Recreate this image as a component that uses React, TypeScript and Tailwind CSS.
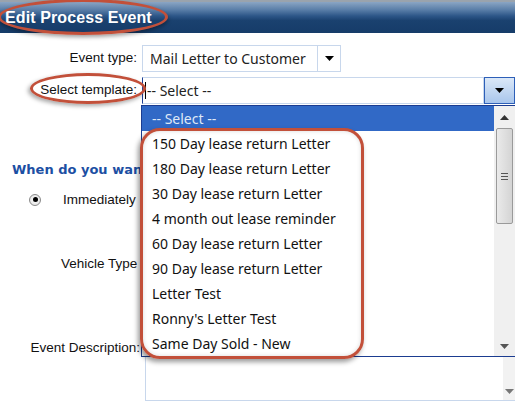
import React from "react";

const templates = [
  "150 Day lease return Letter",
  "180 Day lease return Letter",
  "30 Day lease return Letter",
  "4 month out lease reminder",
  "60 Day lease return Letter",
  "90 Day lease return Letter",
  "Letter Test",
  "Ronny's Letter Test",
  "Same Day Sold - New",
];

function Caret({ className = "" }: { className?: string }) {
  return (
    <svg width="9" height="5" viewBox="0 0 9 5" className={className}>
      <path d="M0 0 H9 L4.5 5 Z" fill="currentColor" />
    </svg>
  );
}

export default function App() {
  return (
    <div className="relative w-[515px] h-[416px] overflow-hidden bg-white font-['Liberation_Sans',Arial,sans-serif]">
      {/* barra do título */}
      <div className="h-[33px] border-t-2 border-[#9aa3ad] bg-[linear-gradient(180deg,#8aa5c4_0%,#5a7ea8_25%,#2d5688_45%,#1a416f_60%,#163c69_100%)] flex items-center pl-[5px]">
        <h1 className="text-white font-bold text-[16px] tracking-[0.1px]">Edit Process Event</h1>
      </div>

      {/* formulário */}
      <div className="grid grid-cols-[137px_1fr] gap-x-[5px] pt-[12px] text-[13.5px] text-[#111]">
        <label className="text-right self-center">Event type:</label>
        <div className="flex h-[27px] w-[199px] font-['Noto_Sans',sans-serif] text-[14px]">
          <div className="flex-1 border border-[#c8d7ec] flex items-center pl-[7px] text-[#222]">
            Mail Letter to Customer
          </div>
          <div className="w-[23px] border border-l-0 border-[#c8d7ec] flex items-center justify-center text-black">
            <Caret />
          </div>
        </div>

        <label className="text-right self-center mt-[5px]">Select template:</label>
        <div className="flex h-[27px] mt-[5px] font-['Noto_Sans',sans-serif] text-[14px]">
          <div className="flex-1 border border-[#c8d7ec] border-l-[#1c3f94] flex items-center pl-[2px] text-[#222]">
            <span className="w-px h-[17px] bg-black mr-[1px]" />
            -- Select --
          </div>
          <div className="w-[31px] border border-[#2d5fb8] bg-[linear-gradient(180deg,#dbe8f8,#a9c6ec)] flex items-center justify-center text-black">
            <Caret />
          </div>
        </div>
      </div>

      {/* o resto do título fica escondido atrás da lista aberta */}
      <div className="ml-[12px] mt-[56px] w-[129px] overflow-hidden font-['DejaVu_Sans',Verdana,sans-serif] font-bold text-[13px] text-[#1c4fa3] whitespace-nowrap">
        When do you want this event to occur?
      </div>

      <div className="flex items-center mt-[10px] pl-[29px] text-[13.5px] text-[#111]">
        <span className="w-[12px] h-[12px] rounded-full border border-[#8a8a8a] bg-[radial-gradient(circle,#fff,#dcdcdc)] flex items-center justify-center">
          <span className="w-[5px] h-[5px] rounded-full bg-black" />
        </span>
        <span className="ml-[22px]">Immediately</span>
      </div>

      <div className="mt-[44px] w-[138px] overflow-hidden text-[13.5px] text-[#111]">
        <span className="block pl-[61px] whitespace-nowrap">Vehicle Type:</span>
      </div>

      <div className="grid grid-cols-[140px_1fr] gap-x-[5px] mt-[79px] text-[13.5px] text-[#111]">
        <span className="text-right self-start mt-[-15px]">Event Description:</span>
        <div className="h-[48px] border border-[#c8d7ec] border-r-0 flex justify-end">
          <div className="w-[12px] bg-[#f2f2f2] flex items-end justify-center pb-[6px] text-[#777]">
            <Caret />
          </div>
        </div>
      </div>

      {/* lista aberta do select */}
      <div className="absolute left-[141px] top-[105px] w-[380px] h-[252px] bg-white border border-[#1b3c90] flex font-['Noto_Sans',sans-serif] text-[14px] text-[#111]">
        <ul className="flex-1">
          <li className="h-[25px] bg-[#3169c6] text-[#dfe8f6] flex items-center pl-[10px]">-- Select --</li>
          {templates.map((t) => (
            <li key={t} className="h-[25px] flex items-center pl-[10px]">{t}</li>
          ))}
        </ul>
        <div className="w-[26px] bg-[#f0f0f0] flex flex-col items-center pr-[6px]">
          <div className="h-[22px] flex items-center justify-center text-[#333]">
            <Caret className="rotate-180" />
          </div>
          <div className="w-[17px] h-[96px] rounded-[2px] border border-[#9a9a9a] bg-[linear-gradient(90deg,#eaeaea,#d4d4d4)] flex flex-col items-center justify-center gap-[2px]">
            <span className="w-[7px] h-px bg-[#555]" />
            <span className="w-[7px] h-px bg-[#555]" />
            <span className="w-[7px] h-px bg-[#555]" />
          </div>
          <div className="flex-1" />
          <div className="h-[20px] flex items-center justify-center text-[#555]">
            <Caret />
          </div>
        </div>
      </div>

      {/* anotações em vermelho */}
      <div className="absolute left-[-2px] top-[-1px] w-[170px] h-[36px] rounded-[50%] border-[3px] border-[#c2503a] shadow-[0_2px_4px_rgba(0,0,0,0.4)]" />
      <div className="absolute left-[30px] top-[73px] w-[116px] h-[31px] rounded-[50%] border-[3px] border-[#c2503a] shadow-[-2px_2px_4px_rgba(0,0,0,0.35)]" />
      <div className="absolute left-[140px] top-[128px] w-[224px] h-[231px] rounded-[20px] border-[3px] border-[#c2503a] shadow-[-2px_3px_5px_rgba(0,0,0,0.4),inset_0_0_4px_rgba(0,0,0,0.15)]" />
    </div>
  );
}
